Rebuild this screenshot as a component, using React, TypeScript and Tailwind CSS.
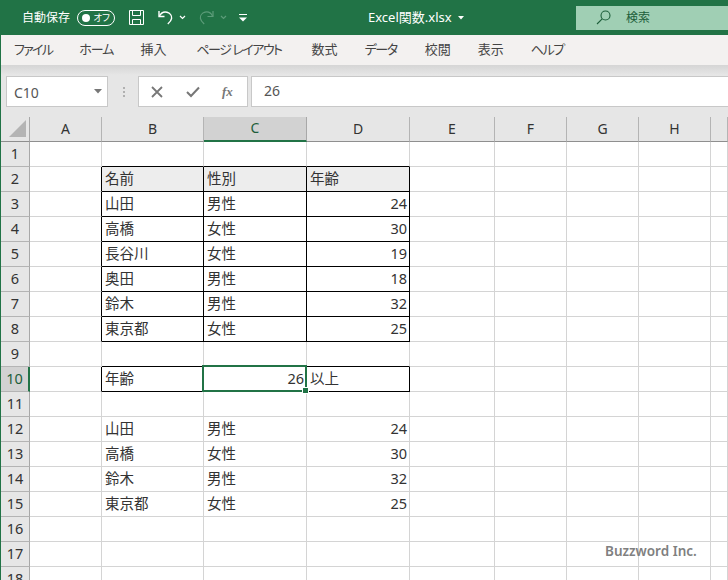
import { Fragment } from "react"

const font = "font-['Noto_Sans','Noto_Sans_CJK_JP',sans-serif]"

const tabs = [
  { label: "ファイル", extra: "tracking-[-1.7px]" },
  { label: "ホーム", extra: "tracking-[-1px]" },
  { label: "挿入", extra: "" },
  { label: "ページ レイアウト", extra: "ml-[3px] tracking-[-1.5px]" },
  { label: "数式", extra: "ml-[3px]" },
  { label: "データ", extra: "tracking-[-1.4px]" },
  { label: "校閲", extra: "ml-[1px]" },
  { label: "表示", extra: "" },
  { label: "ヘルプ", extra: "tracking-[-1.4px]" },
]
const columns = ["A", "B", "C", "D", "E", "F", "G", "H", "I"]
const rowNumbers = Array.from({ length: 18 }, (_, i) => i + 1)

// セルの中身 (行番号 -> [B, C, D])
const sheet: Record<number, [string, string, string]> = {
  2: ["名前", "性別", "年齢"],
  3: ["山田", "男性", "24"],
  4: ["高橋", "女性", "30"],
  5: ["長谷川", "女性", "19"],
  6: ["奥田", "男性", "18"],
  7: ["鈴木", "男性", "32"],
  8: ["東京都", "女性", "25"],
  10: ["年齢", "26", "以上"],
  12: ["山田", "男性", "24"],
  13: ["高橋", "女性", "30"],
  14: ["鈴木", "男性", "32"],
  15: ["東京都", "女性", "25"],
}

const boxedRow = (r: number) => (r >= 2 && r <= 8) || r === 10

function Cell({ row, col }: { row: number; col: number }) {
  const boxed = boxedRow(row)
  const inBox = col >= 1 && col <= 3
  const rightBlack = boxed && col >= 0 && col <= 3
  const bottomBlack = inBox && (boxed || row === 1 || row === 9)
  const value = inBox ? sheet[row]?.[col - 1] : undefined
  const numeric = value !== undefined && /^\d+$/.test(value)
  const selected = row === 10 && col === 2

  return (
    <div
      className={`relative flex items-center border-r border-b pb-[2px] text-[14.5px] leading-none text-[#333] ${
        rightBlack ? "border-r-black" : "border-r-[#d4d4d4]"
      } ${bottomBlack ? "border-b-black" : "border-b-[#d4d4d4]"} ${
        row === 2 && inBox ? "bg-[#ededed]" : "bg-white"
      } ${numeric ? "justify-end pr-[2px]" : "pl-[3px]"}`}
    >
      {value}
      {selected && (
        <>
          <div className="absolute -left-[2px] -top-[2px] -right-[1px] -bottom-[1px] z-10 border-2 border-[#217346]" />
          <div className="absolute -right-[3px] -bottom-[3px] z-10 h-[7px] w-[7px] border border-white bg-[#217346]" />
        </>
      )}
    </div>
  )
}

function TitleBar() {
  return (
    <div className="flex h-[35px] shrink-0 items-center bg-[#217346] text-white">
      <span className="ml-[21px] text-[12px]">自動保存</span>
      <div className="ml-[7px] flex h-[16px] w-[38px] items-center justify-between rounded-full border border-white pl-[4px] pr-[4px]">
        <span className="h-[8px] w-[8px] rounded-full bg-white" />
        <span className="text-[9.5px] leading-none [font-feature-settings:'palt']">オフ</span>
      </div>
      <svg className="ml-[13px]" width="17" height="17" viewBox="0 0 17 17" fill="none" stroke="#fff" strokeWidth="1">
        <path d="M1.5 1.5h14v14h-14z" />
        <path d="M4.5 1.5v5h8v-5M4.5 15.5v-5h8v5" />
      </svg>
      <svg className="ml-[12px]" width="17" height="17" viewBox="0 0 17 17" fill="none" stroke="#fff" strokeWidth="1.4">
        <path d="M2 2v5.5h5.5" />
        <path d="M2.5 7C4 4 7 2.5 10 3.2c3 .8 5 3.4 4.6 6.2-.3 2.2-2 4-3.8 5.6" />
      </svg>
      <svg className="ml-[5px]" width="7" height="5" viewBox="0 0 7 5" fill="none" stroke="#fff" strokeWidth="1.2">
        <path d="M1 1l2.5 2.5L6 1" />
      </svg>
      <svg className="ml-[12px]" width="17" height="17" viewBox="0 0 17 17" fill="none" stroke="#5c9c79" strokeWidth="1.2">
        <path d="M15 2v5.5H9.5" />
        <path d="M14.5 7C13 4 10 2.5 7 3.2 4 4 2 6.6 2.4 9.4c.3 2.2 2 4 3.8 5.6" />
      </svg>
      <svg className="ml-[5px]" width="7" height="5" viewBox="0 0 7 5" fill="none" stroke="#5c9c79" strokeWidth="1.2">
        <path d="M1 1l2.5 2.5L6 1" />
      </svg>
      <svg className="ml-[12px]" width="8" height="8" viewBox="0 0 8 8" fill="#fff">
        <path d="M0 0h8v1H0zM0 3.5h8L4 7.5z" />
      </svg>
      <span className="ml-[121px] text-[13px]">Excel関数.xlsx</span>
      <svg className="ml-[6px]" width="6" height="4" viewBox="0 0 6 4" fill="#fff">
        <path d="M0 0h6L3 3.5z" />
      </svg>
      <div className="ml-auto flex h-[24px] w-[152px] items-center self-center bg-[#a0cfb4] text-[#1d5e3a]">
        <svg className="ml-[20px]" width="15" height="15" viewBox="0 0 15 15" fill="none" stroke="#1d5e3a" strokeWidth="1.1">
          <circle cx="9.5" cy="5.5" r="4.5" />
          <path d="M6.2 8.8L1 14" />
        </svg>
        <span className="ml-[15px] text-[12px]">検索</span>
      </div>
    </div>
  )
}

function TabBar() {
  return (
    <div className="flex h-[30px] shrink-0 items-center gap-[27px] bg-[#f3f1f0] pl-[13px] text-[13px] text-[#444] [font-feature-settings:'palt']">
      {tabs.map((t) => (
        <span key={t.label} className={`whitespace-nowrap ${t.extra}`}>{t.label}</span>
      ))}
    </div>
  )
}

function FormulaBar() {
  return (
    <div className="flex h-[52px] shrink-0 items-end bg-[linear-gradient(#d5d5d5,#e6e6e6_10px)] pb-[10px]">
      <div className="ml-[5px] flex h-[31px] w-[102px] items-center justify-between border border-[#c8c8c8] bg-white pl-[7px] pr-[5px] text-[14px] text-[#555]">
        <span className="pt-[2px]">C10</span>
        <svg width="8" height="5" viewBox="0 0 8 5" fill="#777">
          <path d="M0 0h8L4 4.5z" />
        </svg>
      </div>
      <div className="ml-[14px] flex h-[31px] w-[4px] flex-col items-center justify-center gap-[2px]">
        <span className="h-[2px] w-[2px] bg-[#b0b0b0]" />
        <span className="h-[2px] w-[2px] bg-[#b0b0b0]" />
        <span className="h-[2px] w-[2px] bg-[#b0b0b0]" />
      </div>
      <div className="ml-[12px] flex h-[31px] w-[110px] items-center border border-[#c8c8c8] bg-white text-[#777]">
        <svg className="ml-[12px]" width="12" height="12" viewBox="0 0 12 12" fill="none" stroke="#777" strokeWidth="1.8">
          <path d="M1 1l10 10M11 1L1 11" />
        </svg>
        <svg className="ml-[23px]" width="14" height="12" viewBox="0 0 14 12" fill="none" stroke="#777" strokeWidth="2">
          <path d="M1 6l4 4 8-8.5" />
        </svg>
        <span className="ml-[22px] font-['Liberation_Serif',serif] text-[13px] font-bold italic leading-none">fx</span>
      </div>
      <div className="ml-[3px] flex h-[31px] flex-1 items-center border-y border-l border-[#c8c8c8] bg-white pb-[2px] pl-[12px] text-[14px] text-[#555]">
        26
      </div>
    </div>
  )
}

function SheetGrid() {
  return (
    <div className="relative grid flex-1 grid-cols-[29px_72px_102px_103px_103px_85px_72px_72px_72px_17px] grid-rows-[25px_repeat(18,25px)] overflow-hidden bg-white">
      <div className="relative border-r border-b border-r-[#a8a8a8] border-b-[#8f8f8f] bg-[#e6e6e6]">
        <svg className="absolute left-[8px] top-[3px]" width="18" height="18" viewBox="0 0 18 18" fill="#b4b4b4">
          <path d="M0 17L17 0v17z" />
        </svg>
      </div>
      {columns.map((c) => (
        <div
          key={c}
          className={`flex items-center justify-center pb-[2px] text-[14px] ${
            c === "C"
              ? "border-b-2 border-r border-b-[#217346] border-r-[#a8a8a8] bg-[#d2d2d2] text-[#1d5e3a]"
              : "border-r border-b border-r-[#b4b4b4] border-b-[#8f8f8f] bg-[#e6e6e6] text-[#333]"
          }`}
        >
          {c === "I" ? "" : c}
        </div>
      ))}
      {rowNumbers.map((r) => (
        <Fragment key={r}>
          <div
            className={`flex items-center justify-center border-b pb-[2px] text-[14.5px] leading-none ${
              r === 10
                ? "border-r-2 border-r-[#217346] border-b-[#b4b4b4] bg-[#d2d2d2] text-[#1d5e3a]"
                : "border-r border-r-[#a8a8a8] border-b-[#b4b4b4] bg-[#e6e6e6] text-[#333]"
            }`}
          >
            {r}
          </div>
          {columns.map((c, i) => (
            <Cell key={c} row={r} col={i} />
          ))}
        </Fragment>
      ))}
      <span className="absolute left-[604px] top-[428px] z-10 text-[13.5px] font-semibold leading-none text-[#808080]">
        Buzzword Inc.
      </span>
    </div>
  )
}

export default function App() {
  return (
    <div className={`flex h-[580px] w-[728px] flex-col overflow-hidden border-l border-[#217346] ${font}`}>
      <TitleBar />
      <TabBar />
      <FormulaBar />
      <SheetGrid />
    </div>
  )
}
